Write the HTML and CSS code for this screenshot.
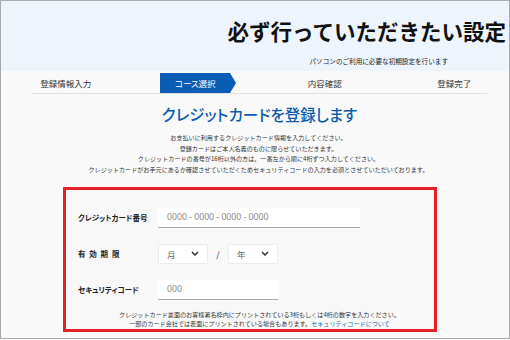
FILE: index.html
```html
<!DOCTYPE html>
<html lang="ja">
<head>
<meta charset="utf-8">
<title>必ず行っていただきたい設定</title>
<link rel="stylesheet" href="styles.css">
</head>
<body>
<div class="frame">
  <header class="hero">
    <h1 class="hero-title">必ず行っていただきたい設定</h1>
    <p class="hero-sub">パソコンのご利用に必要な初期設定を行います</p>
  </header>
  <ol class="steps">
    <li class="step">登録情報入力</li>
    <li class="step"><span class="step-badge">コース選択</span></li>
    <li class="step">内容確認</li>
    <li class="step">登録完了</li>
  </ol>
  <h2 class="heading">クレジットカードを登録します</h2>
  <p class="intro">お支払いに利用するクレジットカード情報を入力してください。<br>登録カードはご本人名義のものに限らせていただきます。<br>クレジットカードの番号が16桁以外の方は、一番左から順に4桁ずつ入力してください。<br>クレジットカードがお手元にあるか確認させていただくためセキュリティコードの入力を必須とさせていただいております。</p>
  <section class="card-form">
    <div class="row">
      <span class="label">クレジットカード番号</span>
      <input class="field field-card" type="text" placeholder="0000 - 0000 - 0000 - 0000">
    </div>
    <div class="row">
      <span class="label label-spaced">有効期限</span>
      <div class="select"><span>月</span><svg class="chev" width="8" height="5" viewBox="0 0 8 5"><path d="M1 1 L4 4 L7 1" fill="none" stroke="#333" stroke-width="1.5"/></svg></div>
      <span class="slash">/</span>
      <div class="select"><span>年</span><svg class="chev" width="8" height="5" viewBox="0 0 8 5"><path d="M1 1 L4 4 L7 1" fill="none" stroke="#333" stroke-width="1.5"/></svg></div>
    </div>
    <div class="row">
      <span class="label">セキュリティコード</span>
      <input class="field field-code" type="text" placeholder="000">
    </div>
    <p class="form-note">クレジットカード裏面のお客様署名枠内にプリントされている3桁もしくは4桁の数字を入力ください。<br>一部のカード会社では表面にプリントされている場合もあります。<a class="link" href="#">セキュリティコードについて</a></p>
  </section>
</div>
</body>
</html>
```

FILE: styles.css
```css
* {
  box-sizing: border-box;
  margin: 0;
  padding: 0;
}

body {
  margin: 0;
  background: #ffffff;
  font-family: "Noto Sans CJK JP", "Noto Sans", sans-serif;
  color: #222;
}

.frame {
  width: 510px;
  height: 339px;
  border: 1px solid #a9a9a9;
  background: #f9f9f9;
  overflow: hidden;
}

.hero {
  height: 70px;
  background: #edf4fb;
  text-align: right;
  padding-top: 16px;
}

.hero-title {
  font-size: 21.5px;
  line-height: 28px;
  font-weight: 700;
  color: #111;
  padding-right: 3px;
}

.hero-sub {
  margin-top: 11px;
  font-size: 6.6px;
  line-height: 10px;
  color: #222;
  padding-right: 61px;
}

.steps {
  list-style: none;
  display: grid;
  grid-template-columns: repeat(4, 129.5px);
  height: 23px;
  padding-top: 2px;
  background: linear-gradient(#e2e2e2, #e2e2e2) no-repeat 30px 100% / 456px 1px;
  font-feature-settings: "palt";
}

.step {
  display: flex;
  align-items: center;
  justify-content: center;
  height: 20px;
  font-size: 8.5px;
  color: #333;
}

.step-badge {
  position: relative;
  display: flex;
  align-items: center;
  justify-content: center;
  width: 70px;
  height: 20px;
  background: #0b5cb5;
  color: #fff;
}

.step-badge::after {
  content: "";
  position: absolute;
  left: 100%;
  top: 0;
  border-left: 6px solid #0b5cb5;
  border-top: 10px solid transparent;
  border-bottom: 10px solid transparent;
}

.heading {
  margin-top: 9px;
  text-align: center;
  font-size: 15.5px;
  line-height: 22px;
  font-weight: 500;
  color: #0d5bad;
  padding-left: 9px;
  font-feature-settings: "palt";
}

.intro {
  margin-top: 8px;
  text-align: center;
  font-size: 6.1px;
  line-height: 10.7px;
  color: #333;
  padding-left: 7px;
}

.card-form {
  margin: 11px 0 0 62px;
  width: 374px;
  height: 145px;
  border: 3px solid #e6202b;
  background: #f8f8f8;
  padding: 18px 0 0 12px;
  display: flex;
  flex-direction: column;
  gap: 16px;
}

.row {
  display: flex;
  align-items: center;
  height: 20px;
}

.label {
  width: 80px;
  font-size: 7.5px;
  font-weight: 700;
  color: #222;
  font-feature-settings: "palt";
}

.label-spaced {
  letter-spacing: 3.8px;
}

.field {
  height: 20px;
  border: none;
  border-bottom: 1px solid #a8a8a8;
  background: #fff;
  padding-left: 9px;
  font-family: "Noto Sans", sans-serif;
  font-size: 8.7px;
  color: #333;
  outline: none;
}

.field::placeholder {
  color: #8a8a8a;
}

.field-card {
  width: 202px;
}

.field-code {
  width: 120px;
}

.select {
  display: flex;
  align-items: center;
  justify-content: space-between;
  width: 50px;
  height: 20px;
  background: #fff;
  border: 1px solid #ececec;
  border-radius: 2px;
  padding: 0 8px;
  font-size: 8.5px;
  color: #666;
}

.slash {
  width: 20px;
  text-align: center;
  font-size: 8.5px;
  color: #333;
}

.form-note {
  margin-top: -6px;
  text-align: center;
  font-size: 6.1px;
  line-height: 9.5px;
  color: #333;
  padding-left: 7px;
}

.link {
  color: #1768c2;
  text-decoration: none;
}
```
